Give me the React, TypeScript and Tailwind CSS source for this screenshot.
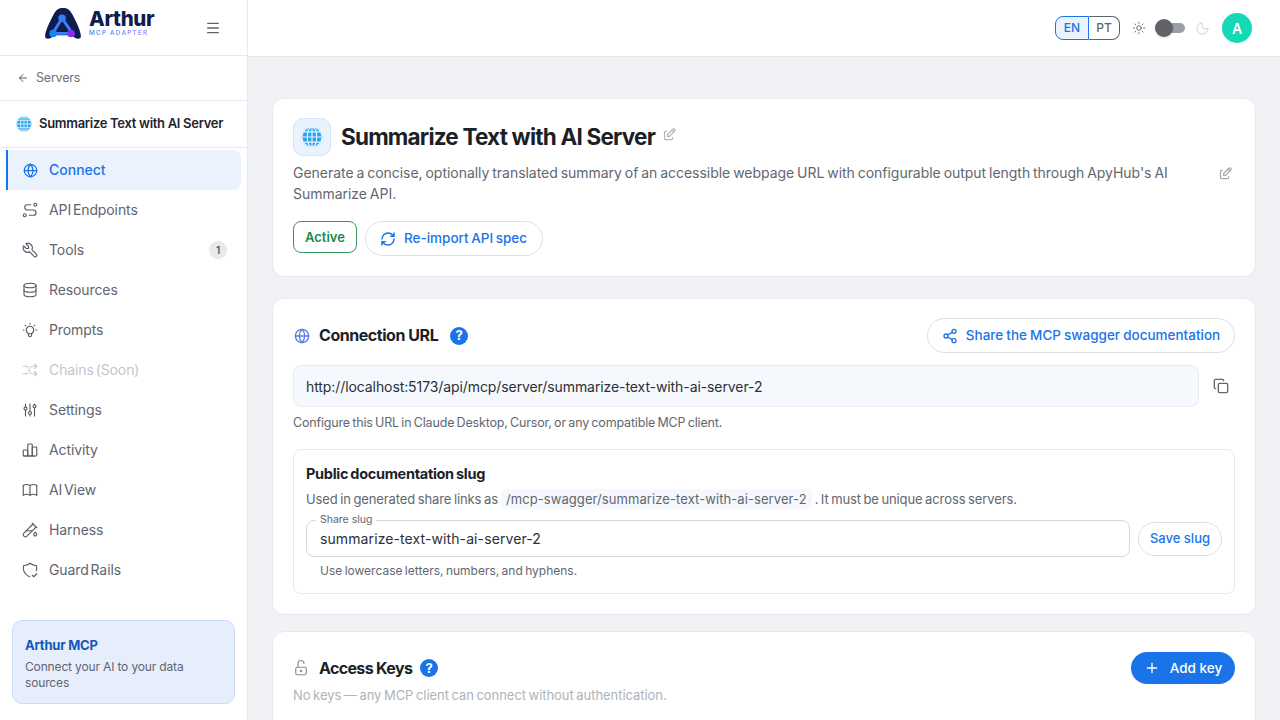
import { ArrowLeft, Menu, Sun, Moon, RefreshCw, Share2, Copy, Plus, Globe } from "lucide-react";
import {
  TbRoute,
  TbTool,
  TbDatabase,
  TbBulb,
  TbArrowsShuffle,
  TbAdjustments,
  TbChartBar,
  TbBook,
  TbTestPipe,
  TbShieldCheck,
  TbEdit,
  TbLockOpen,
} from "react-icons/tb";

const font = "font-['Inter','Liberation_Sans',sans-serif]";

const EmojiGlobe = ({ size }: { size: number }) => (
  <svg width={size} height={size} viewBox="0 0 24 24" fill="none">
    <circle cx="12" cy="12" r="11.5" fill="#2ba3ec" />
    <g stroke="#e8f6ff" strokeWidth="1.3">
      <circle cx="12" cy="12" r="11" />
      <ellipse cx="12" cy="12" rx="5.2" ry="11" />
      <path d="M12 1v22M1.5 12h21M3 6.5h18M3 17.5h18" />
    </g>
  </svg>
);

const Logo = () => (
  <svg width="38" height="32" viewBox="0 0 40 34" fill="none">
    <path
      d="M1 30C1 24 7 13 10 7C13 1 16 0 20 0C24 0 27 1 30 7C33 13 39 24 39 30C39 33 36 33 33 32L29 29H11L7 32C4 33 1 33 1 30Z"
      fill="#111c4e"
    />
    <path d="M19 11L9 27H30L19 11Z" stroke="#3b82f6" strokeWidth="3" />
    <circle cx="19" cy="11" r="4" fill="#2f80f6" />
    <circle cx="9.5" cy="27" r="4" fill="#1485f5" />
    <circle cx="28.5" cy="27" r="4" fill="#8b2cf5" />
  </svg>
);

const HelpDot = ({ className }: { className?: string }) => (
  <span className={`w-[18px] h-[18px] rounded-full bg-[#1a73e8] text-white text-[13px] leading-none font-bold flex items-center justify-center ${className ?? ""}`}>
    ?
  </span>
);

const navItems = [
  { label: "API Endpoints", icon: TbRoute },
  { label: "Tools", icon: TbTool, badge: "1" },
  { label: "Resources", icon: TbDatabase },
  { label: "Prompts", icon: TbBulb },
  { label: "Chains (Soon)", icon: TbArrowsShuffle, disabled: true },
  { label: "Settings", icon: TbAdjustments },
  { label: "Activity", icon: TbChartBar },
  { label: "AI View", icon: TbBook },
  { label: "Harness", icon: TbTestPipe },
  { label: "Guard Rails", icon: TbShieldCheck },
];

const Sidebar = () => (
  <aside className="w-[248px] shrink-0 h-full bg-white border-r border-[#e8e9ed] flex flex-col">
    <div className="h-[56px] shrink-0 border-b border-[#e8e9ed] flex items-start pt-[8px] pl-[44px] pr-[26px]">
      <Logo />
      <div className="ml-[7px] pt-[2px] flex flex-col">
        <span className="text-[20.5px] leading-[18px] font-extrabold text-[#111c4e] tracking-[-0.35px]">Arthur</span>
        <span className="mt-[2px] text-[6.5px] leading-[7px] font-semibold tracking-[1.1px] bg-gradient-to-r from-[#3b93f6] to-[#a78bfa] bg-clip-text text-transparent">
          MCP ADAPTER
        </span>
      </div>
      <Menu size={16} className="ml-auto mt-[12px] text-[#5f6368]" />
    </div>
    <div className="h-[45px] shrink-0 border-b border-[#e8e9ed] flex items-center pl-[17px] gap-[7px] text-[#6b7280]">
      <ArrowLeft size={12} className="text-[#555b66]" />
      <span className="text-[12.5px] tracking-[-0.2px]">Servers</span>
    </div>
    <div className="h-[47px] shrink-0 border-b border-[#e8e9ed] flex items-center pl-[16px] gap-[7px]">
      <EmojiGlobe size={16} />
      <span className="text-[13px] font-semibold text-[#1f2430] tracking-[-0.3px]">Summarize Text with AI Server</span>
    </div>
    <nav className="pt-[2px] pl-[6px] pr-[6px] flex flex-col">
      <div className="h-[40px] rounded-r-[8px] bg-[#eaf2fe] border-l-2 border-[#1a73e8] flex items-center pl-[15px] gap-[11px] text-[#1a73e8]">
        <Globe size={15} strokeWidth={2} />
        <span className="text-[14px] font-medium pb-[2px]">Connect</span>
      </div>
      {navItems.map((item) => (
        <div
          key={item.label}
          className={`h-[40px] flex items-center pl-[15px] pr-[14px] gap-[10px] ${
            item.disabled ? "text-[#c4c6cb]" : "text-[#5f6570]"
          }`}
        >
          <item.icon size={18} strokeWidth={1.5} className={item.disabled ? "" : "text-[#555b66]"} />
          <span className="text-[14px] tracking-[-0.1px] [word-spacing:-2px] pb-[2px]">{item.label}</span>
          {item.badge && (
            <span className="ml-auto w-[18px] h-[18px] rounded-full bg-[#e8e9eb] text-[#555b66] text-[10px] font-semibold flex items-center justify-center">
              {item.badge}
            </span>
          )}
        </div>
      ))}
    </nav>
    <div className="mt-auto mx-[12px] mb-[16px] h-[84px] rounded-[10px] bg-[#e7eefb] border border-[#ccdcf8] px-[12px] pt-[14px]">
      <div className="text-[13px] leading-[20px] font-bold text-[#1557b8] tracking-[-0.2px]">Arthur MCP</div>
      <div className="mt-[4px] text-[12px] leading-[16px] text-[#5f6570] tracking-[-0.15px]">Connect your AI to your data sources</div>
    </div>
  </aside>
);

const Topbar = () => (
  <header className="h-[57px] shrink-0 bg-white border-b border-[#e8e9ed] flex items-center justify-end pr-[28px]">
    <div className="flex h-[24px] text-[12px] font-medium">
      <div className="w-[34px] rounded-l-[8px] border border-[#1a73e8] bg-[#eaf2fe] text-[#1a73e8] flex items-center justify-center">EN</div>
      <div className="w-[31px] rounded-r-[8px] border border-l-0 border-[#5f6368] text-[#5f6368] flex items-center justify-center">PT</div>
    </div>
    <Sun size={14} strokeWidth={1.5} className="ml-[12px] text-[#555b66]" />
    <div className="ml-[10px] relative w-[29px] h-[10px] rounded-full bg-[#9b9ea3]">
      <div className="absolute -left-[1px] -top-[4px] w-[18px] h-[18px] rounded-full bg-[#5f6368] shadow" />
    </div>
    <Moon size={15} strokeWidth={1.5} className="ml-[10px] text-[#c9cbcf]" />
    <div className="ml-[12px] w-[30px] h-[30px] rounded-full bg-[#14d9b4] text-white text-[14px] font-semibold flex items-center justify-center">A</div>
  </header>
);

const Card = ({ children, className }: { children: React.ReactNode; className?: string }) => (
  <section className={`bg-white rounded-[12px] border border-[#e8e9ed] px-[20px] shrink-0 ${className ?? ""}`}>{children}</section>
);

export default function App() {
  return (
    <div className={`${font} w-[1280px] h-[720px] overflow-hidden flex bg-[#f1f2f5]`}>
      <Sidebar />
      <div className="flex-1 h-full min-w-0 flex flex-col">
        <Topbar />
        <main className="flex-1 min-h-0 overflow-hidden px-[24px] pt-[41px] flex flex-col">
          <Card className="h-[179px] pt-[19px] mb-[21px]">
            <div className="flex items-center h-[38px]">
              <div className="w-[38px] h-[38px] rounded-[10px] bg-[#eaf2fe] border border-[#d5e3fb] flex items-center justify-center">
                <EmojiGlobe size={22} />
              </div>
              <h1 className="ml-[10px] text-[22.5px] font-bold text-[#1c1f26] tracking-[-0.8px]">Summarize Text with AI Server</h1>
              <TbEdit size={15} className="ml-[7px] -mt-[6px] text-[#b4b7bc]" />
            </div>
            <div className="mt-[6px] flex items-start">
              <p className="w-[880px] text-[14px] leading-[21px] text-[#62676f] tracking-[-0.03px] [word-spacing:-1px]">
                Generate a concise, optionally translated summary of an accessible webpage URL with configurable output length through ApyHub's AI Summarize API.
              </p>
              <TbEdit size={15} className="ml-auto mr-[2px] mt-[4px] text-[#a4a7ad]" />
            </div>
            <div className="mt-[17px] flex items-start gap-[8px]">
              <span className="h-[32px] px-[11px] pt-[2px] rounded-[8px] border border-[#339a5b] text-[#1e8a47] text-[13px] font-semibold flex items-center">Active</span>
              <button className="h-[35px] w-[178px] pl-[14px] rounded-full border border-[#dcdfe4] text-[#1a73e8] text-[13.5px] font-medium flex items-center gap-[8px] [word-spacing:-1px]">
                <RefreshCw size={16} strokeWidth={2.2} />
                Re-import API spec
              </button>
            </div>
          </Card>

          <Card className="h-[317px] pt-[19px] mb-[16px]">
            <div className="flex items-center h-[35px]">
              <Globe size={16} className="ml-[1px] text-[#5b7fe0]" />
              <h2 className="ml-[9px] pb-[2px] text-[16px] font-bold text-[#1c1f26] tracking-[-0.45px]">Connection URL</h2>
              <HelpDot className="ml-[12px]" />
              <button className="ml-auto h-[35px] w-[308px] rounded-full border border-[#dcdfe4] text-[#1a73e8] text-[13.5px] font-medium flex items-center justify-center gap-[8px] [word-spacing:-0.5px]">
                <Share2 size={16} />
                Share the MCP swagger documentation
              </button>
            </div>
            <div className="mt-[12px] flex items-center">
              <div className="w-[906px] h-[42px] rounded-[8px] bg-[#f5f8fd] border border-[#e8ebf1] px-[12px] flex items-center text-[14px] text-[#2c3038] tracking-[-0.09px]">
                http://localhost:5173/api/mcp/server/summarize-text-with-ai-server-2
              </div>
              <Copy size={16} className="ml-[14px] text-[#62676f]" />
            </div>
            <p className="mt-[8px] text-[12.5px] leading-[16px] text-[#62676f] tracking-[-0.17px] [word-spacing:-1px]">
              Configure this URL in Claude Desktop, Cursor, or any compatible MCP client.
            </p>
            <div className="mt-[18px] h-[145px] rounded-[8px] border border-[#e8e9ed] px-[12px] pt-[14px]">
              <h3 className="text-[14.5px] leading-[20px] font-bold text-[#1c1f26] tracking-[-0.3px] [word-spacing:-1px]">Public documentation slug</h3>
              <p className="mt-[5px] text-[13px] leading-[20px] text-[#62676f] flex items-center tracking-[-0.1px] [word-spacing:-1px]">
                Used in generated share links as
                <span className="mx-[3px] px-[5px] rounded-[4px] bg-[#f5f8fd] text-[13px] text-[#62676f] tracking-[0.08px]">/mcp-swagger/summarize-text-with-ai-server-2</span>
                . It must be unique across servers.
              </p>
              <div className="mt-[11px] flex items-center gap-[8px]">
                <div className="relative w-[824px] h-[37px] rounded-[8px] border border-[#d5d7db] px-[13px] flex items-center text-[14px] text-[#2c3038] tracking-[0.1px]">
                  <span className="absolute left-[9px] -top-[8px] bg-white px-[4px] text-[10.5px] leading-[14px] text-[#62676f] tracking-normal">Share slug</span>
                  summarize-text-with-ai-server-2
                </div>
                <button className="h-[34px] w-[84px] whitespace-nowrap rounded-full border border-[#dcdfe4] text-[#1a73e8] text-[13px] font-medium">Save slug</button>
              </div>
              <p className="mt-[6px] ml-[14px] text-[12px] leading-[16px] text-[#62676f] [word-spacing:-1px]">Use lowercase letters, numbers, and hyphens.</p>
            </div>
          </Card>

          <Card className="h-[200px] pt-[20px]">
            <div className="flex items-center h-[32px]">
              <TbLockOpen size={18} strokeWidth={1.5} className="-ml-[1px] text-[#8a8d93]" />
              <h2 className="ml-[9px] text-[16px] font-bold text-[#1c1f26] tracking-[-0.65px]">Access Keys</h2>
              <HelpDot className="ml-[8px]" />
              <button className="ml-auto h-[32px] w-[104px] rounded-full bg-[#1a73e8] text-white text-[13.5px] font-medium flex items-center justify-center gap-[10px]">
                <Plus size={16} />
                Add key
              </button>
            </div>
            <p className="mt-[1px] text-[13px] leading-[20px] text-[#b0b3b8] tracking-[-0.05px] [word-spacing:-1px]">No keys — any MCP client can connect without authentication.</p>
          </Card>
        </main>
      </div>
    </div>
  );
}
